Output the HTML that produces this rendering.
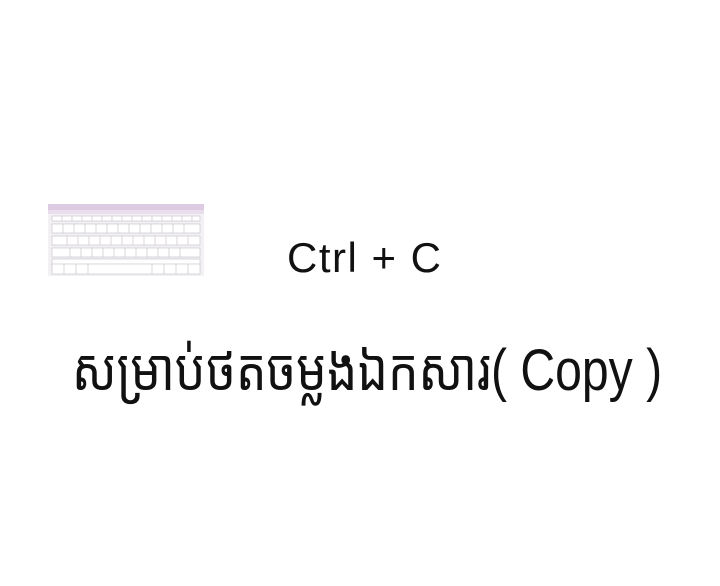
<!DOCTYPE html>
<html><head><meta charset="utf-8"><style>
body{margin:0;width:720px;height:586px;background:#fff;position:relative;overflow:hidden;font-family:"Liberation Sans",sans-serif;color:#111}
.ctrl{position:absolute;left:287px;top:234px;font-size:42px;letter-spacing:1.5px;white-space:nowrap}
.kh{position:absolute;left:72px;top:328px;font-size:58px;white-space:nowrap;font-family:"Liberation Sans","Khmer OS","Noto Sans Khmer",sans-serif;transform:scaleX(0.83);transform-origin:left top}
</style></head><body>
<svg style="position:absolute;left:48px;top:204px" width="156" height="72" viewBox="0 0 156 72">
<rect x="0" y="0" width="156" height="72" fill="#f3f1f4"/>
<rect x="0" y="0" width="156" height="6" fill="#dccbe3"/>
<rect x="0" y="6" width="156" height="4" fill="#e9dfec"/>
<g fill="#fff" stroke="#c9c6cc" stroke-width="0.7">
<rect x="4" y="12" width="148" height="5"/>
<rect x="4" y="20" width="148" height="9"/>
<rect x="4" y="32" width="148" height="9"/>
<rect x="4" y="44" width="148" height="9"/>
<rect x="4" y="55" width="148" height="9"/>
<rect x="4" y="60" width="148" height="10"/>
</g>
<g stroke="#d0cdd2" stroke-width="0.8">
<path d="M14 12v5M24 12v5M34 12v5M44 12v5M54 12v5M64 12v5M74 12v5M84 12v5M94 12v5M104 12v5M114 12v5M124 12v5M134 12v5M144 12v5"/>
<path d="M15 20v9M26 20v9M37 20v9M48 20v9M59 20v9M70 20v9M81 20v9M92 20v9M103 20v9M114 20v9M125 20v9M136 20v9"/>
<path d="M19 32v9M30 32v9M41 32v9M52 32v9M63 32v9M74 32v9M85 32v9M96 32v9M107 32v9M118 32v9M129 32v9M140 32v9"/>
<path d="M22 44v9M33 44v9M44 44v9M55 44v9M66 44v9M77 44v9M88 44v9M99 44v9M110 44v9M121 44v9M132 44v9"/>
<path d="M16 60v10M28 60v10M40 60v10M104 60v10M116 60v10M128 60v10M140 60v10"/>
</g>
</svg>
<div class="ctrl">Ctrl + C</div>
<div class="kh">សម្រាប់ថតចម្លងឯកសារ( Copy )</div>
</body></html>
